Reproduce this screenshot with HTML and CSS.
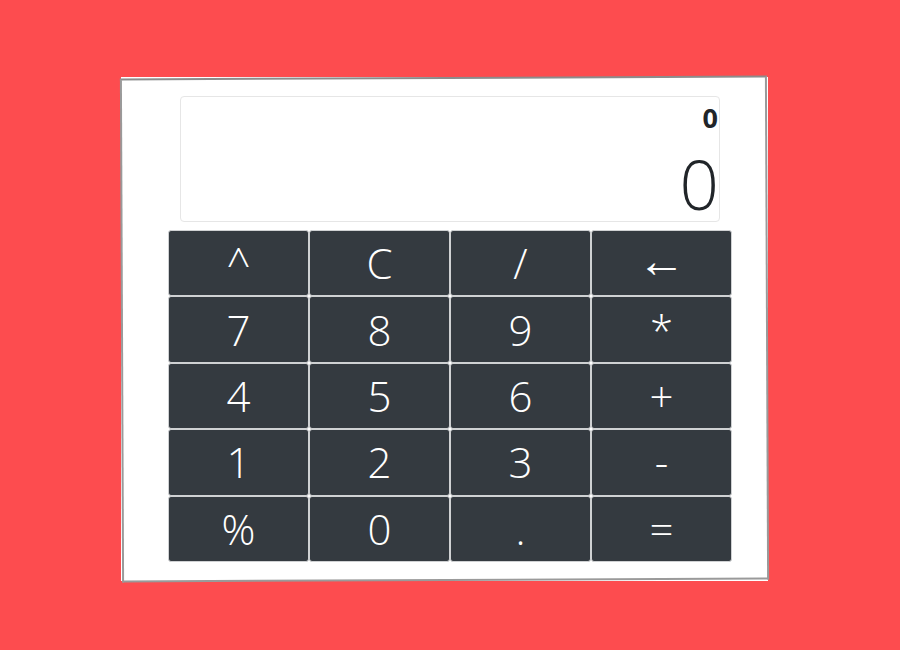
FILE: index.html
```html
<!DOCTYPE html>
<html>
<head>
<meta charset="utf-8">
<link rel="stylesheet" href="styles.css">
</head>
<body>
<div class="card">
  <div class="display">
    <div class="expr">0</div>
    <div class="result">0</div>
  </div>
  <div class="keys">
    <button class="key">^</button>
    <button class="key">C</button>
    <button class="key">/</button>
    <button class="key arrow">←</button>
    <button class="key">7</button>
    <button class="key">8</button>
    <button class="key">9</button>
    <button class="key">*</button>
    <button class="key">4</button>
    <button class="key">5</button>
    <button class="key">6</button>
    <button class="key">+</button>
    <button class="key">1</button>
    <button class="key">2</button>
    <button class="key">3</button>
    <button class="key">-</button>
    <button class="key">%</button>
    <button class="key">0</button>
    <button class="key">.</button>
    <button class="key">=</button>
  </div>
</div>
</body>
</html>
```

FILE: styles.css
```css
html, body {
  margin: 0;
  padding: 0;
}
body {
  background: #fd4c4f;
  width: 900px;
  height: 650px;
  padding-top: 77px;
  box-sizing: border-box;
  font-family: "Open Sans", "Noto Sans", sans-serif;
}
.card {
  position: relative;
  margin-left: 121px;
  width: 647px;
  height: 504px;
  background: #fff;
  box-sizing: border-box;
  padding: 19px 0 0 0;
}
.card::before {
  content: "";
  position: absolute;
  inset: 0;
  border: 2px solid #9a9a9a;
  border-top-color: #8c8c8c;
  transform: rotate(-0.25deg);
  pointer-events: none;
}
.display {
  margin-left: 59px;
  width: 540px;
  height: 126px;
  box-sizing: border-box;
  border: 1px solid #e6e6e6;
  border-radius: 4px;
  display: flex;
  flex-direction: column;
  align-items: flex-end;
  padding: 2px 1px 0 0;
  color: #212529;
}
.expr {
  font-size: 27px;
  font-weight: 700;
  line-height: 38px;
}
.result {
  margin-top: 8px;
  font-size: 69px;
  font-weight: 300;
  line-height: 76px;
  letter-spacing: -1px;
}
.keys {
  margin-left: 47px;
  margin-top: 8px;
  width: 564px;
  display: grid;
  grid-template-columns: repeat(4, 1fr);
  grid-auto-rows: 66.4px;
}
.key {
  background: #343a40;
  color: #fff;
  border: 1px solid #cfd1d3;
  border-radius: 3px;
  font-family: "Open Sans", "Noto Sans", sans-serif;
  font-weight: 300;
  font-size: 42px;
  line-height: 1;
  padding: 0;
  margin: 0;
}
.arrow {
  font-size: 48px;
  padding-bottom: 8px;
}
```
